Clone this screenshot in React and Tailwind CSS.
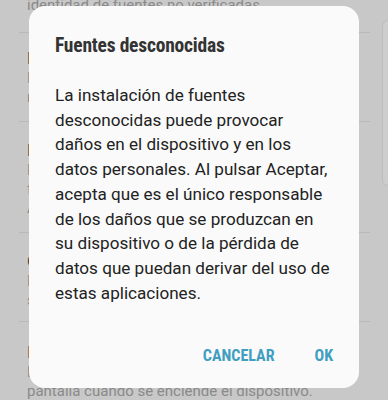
export default function App() {
  const bodyLines = [
    "La instalación de fuentes",
    "desconocidas puede provocar",
    "daños en el dispositivo y en los",
    "datos personales. Al pulsar Aceptar,",
    "acepta que es el único responsable",
    "de los daños que se produzcan en",
    "su dispositivo o de la pérdida de",
    "datos que puedan derivar del uso de",
    "estas aplicaciones.",
  ];
  return (
    <div className="relative w-[388px] h-[400px] overflow-hidden bg-[#c8c8c8]" style={{ fontFamily: "Roboto, 'Noto Sans', sans-serif" }}>
      {/* background settings list */}
      <div className="flex flex-col pl-[27px] pr-[18px] mt-[-4px]">
        <div className="h-[37px] border-b border-[#b9b9b9] ml-[-8px] pl-[8px]">
          <p className="text-[15px] leading-[19px] text-[#8a8a8a] whitespace-nowrap">identidad de fuentes no verificadas</p>
        </div>
        <div className="h-[89px] border-b border-[#b9b9b9] ml-[-8px] pl-[8px] pt-[14px]">
          <p className="text-[17px] leading-[22px] text-[#3c3c3c] whitespace-nowrap">Notificaciones</p>
          <p className="text-[15px] leading-[19px] text-[#8a8a8a] whitespace-nowrap">Mostrar el contenido de las</p>
          <p className="text-[15px] leading-[19px] text-[#8a8a8a] whitespace-nowrap">notificaciones en la pantalla.</p>
        </div>
        <div className="h-[111px] border-b border-[#b9b9b9] ml-[-8px] pl-[8px] pt-[17px]">
          <p className="text-[17px] leading-[22px] text-[#3c3c3c] whitespace-nowrap">Fuentes desconocidas</p>
          <p className="text-[15px] leading-[19px] text-[#8a8a8a] whitespace-nowrap">Permitir la instalación de aplicaciones</p>
          <p className="text-[15px] leading-[19px] text-[#8a8a8a] whitespace-nowrap">fuera de Play Store o Galaxy Apps.</p>
          <p className="text-[15px] leading-[19px] text-[#8a8a8a] whitespace-nowrap">Aplicaciones de terceros.</p>
        </div>
        <div className="h-[89px] border-b border-[#b9b9b9] ml-[-8px] pl-[8px] pt-[17px]">
          <p className="text-[17px] leading-[22px] text-[#3c3c3c] whitespace-nowrap">Cifrar dispositivo</p>
          <p className="text-[15px] leading-[19px] text-[#8a8a8a] whitespace-nowrap">Proteja su dispositivo cifrando</p>
          <p className="text-[15px] leading-[19px] text-[#8a8a8a] whitespace-nowrap">sus datos.</p>
        </div>
        <div className="ml-[-8px] pl-[8px] pt-[19px]">
          <p className="text-[17px] leading-[22px] text-[#3c3c3c] whitespace-nowrap">Inicio seguro</p>
          <p className="text-[15px] leading-[19px] text-[#8a8a8a] whitespace-nowrap">Desbloquear con su patrón al encender la</p>
          <p className="text-[15px] leading-[19px] text-[#8a8a8a] whitespace-nowrap">pantalla cuando se enciende el dispositivo.</p>
        </div>
      </div>

      {/* right side panel */}
      <div className="absolute left-[382px] top-[20px] w-[20px] h-[166px] rounded-l-[6px] bg-[#cdcdcd] border border-[#bdbdbd]" />

      {/* dialog */}
      <div className="absolute left-[29px] top-[6px] w-[330px] h-[382px] rounded-[16px] bg-[#fafafa] flex flex-col pl-[26px] pr-[20px]">
        <h1 className="mt-[27px] text-[19.5px] leading-[26px] font-bold text-[#333] tracking-[-0.2px]" style={{ fontStretch: "condensed" }}>
          Fuentes desconocidas
        </h1>
        <div className="mt-[24px] flex flex-col text-[17.1px] leading-[24.7px] text-[#222]">
          {bodyLines.map((l, i) => (
            <p key={i} className="whitespace-nowrap">{l}</p>
          ))}
        </div>
        <div className="mt-auto mb-[20px] flex justify-end gap-[40px] pr-[6px]">
          <span className="text-[16px] font-bold text-[#3f9ec1]" style={{ fontStretch: "condensed" }}>CANCELAR</span>
          <span className="text-[16px] font-bold text-[#3f9ec1]" style={{ fontStretch: "condensed" }}>OK</span>
        </div>
      </div>
    </div>
  );
}
